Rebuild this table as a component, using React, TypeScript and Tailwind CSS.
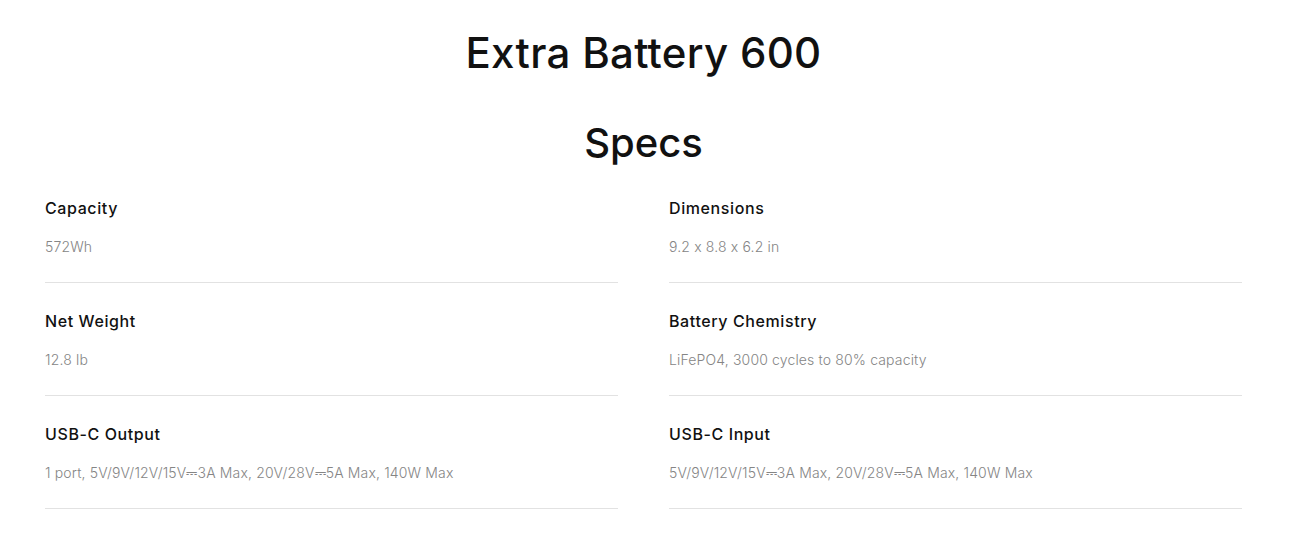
const specs = [
  { label: 'Capacity', value: '572Wh' },
  { label: 'Dimensions', value: '9.2 x 8.8 x 6.2 in' },
  { label: 'Net Weight', value: '12.8 lb' },
  { label: 'Battery Chemistry', value: 'LiFePO4, 3000 cycles to 80% capacity' },
  { label: 'USB-C Output', value: '1 port, 5V/9V/12V/15V⎓3A Max, 20V/28V⎓5A Max, 140W Max' },
  { label: 'USB-C Input', value: '5V/9V/12V/15V⎓3A Max, 20V/28V⎓5A Max, 140W Max' },
]

export default function App() {
  return (
    <div className="min-h-screen bg-white font-['Inter',sans-serif] text-[#111111] [font-feature-settings:'calt'_0]">
      <div className="ml-[45px] w-[1197px] pt-[29px]">
        {/* Heading */}
        <h1 className="text-center text-[42px] leading-[48px] font-medium tracking-[0.3px]">
          Extra Battery 600
        </h1>
        <h2 className="mt-[42px] text-center text-[40px] leading-[48px] font-medium">
          Specs
        </h2>

        {/* Specs grid */}
        <div className="mt-[29px] grid grid-cols-2 gap-x-[51px]">
          {specs.map((s) => (
            <div key={s.label} className="border-b border-[#e2e2e2] pt-[26px] pb-[25px] first:pt-0 [&:nth-child(2)]:pt-0">
              <div className="text-[16px] leading-[24px] font-medium tracking-[0.6px]">{s.label}</div>
              <div className="mt-[17px] text-[14px] leading-[20px] font-light tracking-[0.15px] text-[#858585]">{s.value}</div>
            </div>
          ))}
        </div>
      </div>
    </div>
  )
}
